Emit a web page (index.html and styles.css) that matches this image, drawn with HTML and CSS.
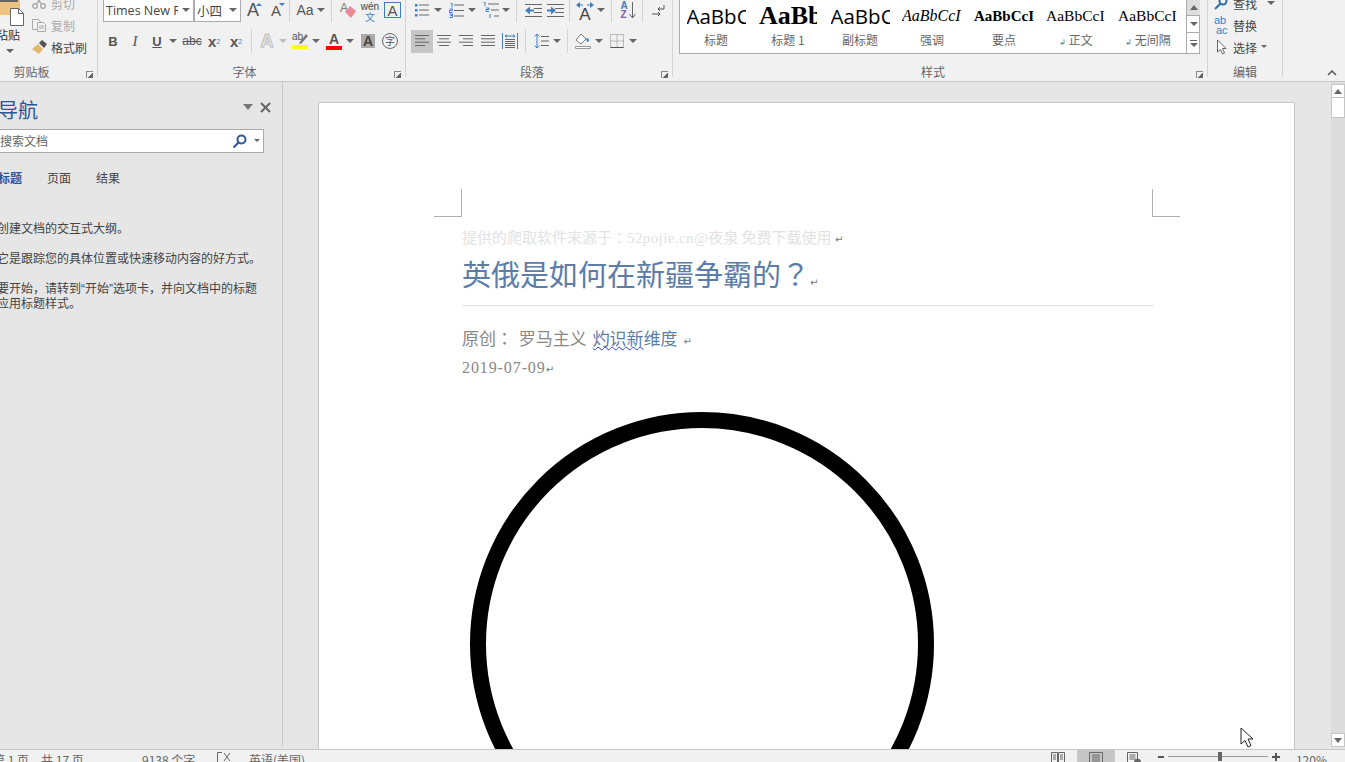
FILE: index.html
```html
<!DOCTYPE html>
<html>
<head>
	<title>Word</title>
	<meta charset="utf-8">
	<link rel="stylesheet" href="styles.css">
</head>
<body>
<div class="app">
	<div class="ribbon">

		<!-- clipboard -->
		<section class="group group-clip">
			<div class="clip-body">
				<div class="paste">
					<svg class="paste-icon" width="26" height="26" viewBox="0 0 26 26"><path d="M0 0h20v15H0z" fill="#edc47f"/><path d="M0 0h18v2H0z" fill="#666"/><path d="M10.5 8.5h8l5 5v12h-13z" fill="#fff" stroke="#666"/><path d="M18.5 8.5v5h5" fill="none" stroke="#666"/></svg>
					<div class="paste-label">粘贴</div>
					<span class="caret paste-caret"></span>
				</div>
				<div class="stack">
					<div class="stack-row disabled">
						<svg width="14" height="14" viewBox="0 0 14 14" fill="none" stroke="#aaa" stroke-width="1.4"><circle cx="3" cy="10" r="2.3"/><circle cx="11" cy="10" r="2.3"/><path d="M4.5 8 10 1M9.5 8 4 1"/></svg>
						<span>剪切</span>
					</div>
					<div class="stack-row disabled">
						<svg width="14" height="14" viewBox="0 0 14 14" fill="#f1f1f1" stroke="#aaa"><path d="M.5 1.5h6l2 2v8h-8z"/><path d="M5.5 4.5h6l2 2v7h-8z"/><path d="M7 8h5M7 10h5" fill="none"/></svg>
						<span>复制</span>
					</div>
					<div class="stack-row">
						<svg width="16" height="14" viewBox="0 0 16 14"><path d="M0 9 6 4l5 5-4 5z" fill="#e5b76c"/><path d="M7 3l3-3 5 4-3 4z" fill="#555"/></svg>
						<span>格式刷</span>
					</div>
				</div>
			</div>
			<div class="group-label">剪贴板</div>
			<i class="launcher"></i>
		</section>

		<!-- font -->
		<section class="group group-font">
			<div class="row row-top">
				<div class="combo combo-font ml1"><span class="combo-text">Times New Roman</span><span class="caret"></span></div>
				<div class="combo combo-size"><span class="combo-text">小四</span><span class="caret"></span></div>
				<div class="btn ml1 letter-lg">A<i class="tick tick-up"></i></div>
				<div class="btn ml1 letter-md">A<i class="tick tick-down"></i></div>
				<i class="sep ml2"></i>
				<div class="btn ml4 letter-aa">Aa</div><span class="caret"></span>
				<i class="sep ml5"></i>
				<div class="btn ml5">
					<svg width="18" height="18" viewBox="0 0 18 18"><text x="1" y="11" font-size="12" font-family="Liberation Sans" fill="#777">A</text><path d="M6 11l5-6 6 5-5 7z" fill="#e98a96"/></svg>
				</div>
				<div class="btn wen"><span class="wen-top">wén</span><span class="wen-bot">文</span></div>
				<div class="btn boxed-a">A</div>
			</div>
			<div class="row">
				<div class="btn fmt-b">B</div>
				<div class="btn fmt-i">I</div>
				<div class="btn fmt-u">U</div><span class="caret"></span>
				<div class="btn ml3 fmt-abc">abc</div>
				<div class="btn fmt-x">x<sub>2</sub></div>
				<div class="btn fmt-x">x<sup>2</sup></div>
				<i class="sep ml4"></i>
				<div class="btn ml4 effect-a">A</div><span class="caret caret-light"></span>
				<div class="btn ml1">
					<svg width="18" height="20" viewBox="0 0 18 20"><text x="1" y="9" font-size="10" font-family="Liberation Sans" fill="#555">ab</text><path d="M8 12l7-9 2 2-7 8z" fill="#777"/><path d="M1 14h16v4H1z" fill="#ffff00"/></svg>
				</div>
				<span class="caret"></span>
				<div class="btn ml2 color-a">A<i class="color-bar"></i></div><span class="caret"></span>
				<div class="btn ml2"><span class="shade-a">A</span></div>
				<div class="btn"><span class="circle-char">字</span></div>
			</div>
			<div class="group-label">字体</div>
			<i class="launcher"></i>
		</section>

		<!-- paragraph -->
		<section class="group group-para">
			<div class="row row-top">
				<div class="btn ml1"><svg width="14" height="14" viewBox="0 0 14 14"><path d="M4 2h10M4 7h10M4 12h10" stroke="#666"/><path d="M0 1h2.500v2.500H0zM0 6h2.500v2.500H0zM0 11h2.500v2.500H0z" fill="#3f7fbf"/></svg></div><span class="caret"></span>
				<div class="btn ml2"><svg width="15" height="15" viewBox="0 0 15 15"><path d="M5 2h10M5 7.500h10M5 13h10" stroke="#666"/><path d="M1 0h2v4.500M.500 6h3v1.500h-3v2h3M.500 11h3v1.500h-2 2v2h-3" fill="none" stroke="#3f7fbf"/></svg></div><span class="caret"></span>
				<div class="btn ml2"><svg width="17" height="17" viewBox="0 0 17 17"><path d="M6 2h11M9 8h8M12 14h5" stroke="#666"/><path d="M1 0h2v4M4 6h3v1.500h-3v2h3M8 12v4" fill="none" stroke="#3f7fbf"/></svg></div><span class="caret"></span>
				<i class="sep ml5"></i>
				<div class="btn ml5"><svg width="17" height="13" viewBox="0 0 17 13"><path d="M0 .500h17M9 4.500h8M9 8.500h8M0 12.500h17" stroke="#666"/><path d="M0 6.500 5 2.500v8zM5 5.500h4v2H5z" fill="#3f7fbf"/></svg></div>
				<div class="btn"><svg width="17" height="13" viewBox="0 0 17 13"><path d="M0 .500h17M8 4.500h9M8 8.500h9M0 12.500h17" stroke="#666"/><path d="M9 6.500 4 2.500v8zM0 5.500h4v2H0z" fill="#3f7fbf"/></svg></div>
				<i class="sep ml3"></i>
				<div class="btn ml4 cn-layout"><svg width="18" height="7" viewBox="0 0 18 7"><path d="M4 0 0 3l4 3zM14 0l4 3-4 3zM4 2.500h3v1H4zM11 2.500h3v1h-3z" fill="#3f7fbf"/></svg><span>A</span></div><span class="caret"></span>
				<i class="sep ml5"></i>
				<div class="btn ml5 sort-btn"><span class="sort-letters"><b class="sort-a">A</b><b class="sort-z">Z</b></span><svg width="7" height="17" viewBox="0 0 7 17"><path d="M3.500 0v16M.500 12l3 4 3-4" fill="none" stroke="#666"/></svg></div>
				<i class="sep ml3"></i>
				<div class="btn ml4"><svg width="13" height="13" viewBox="0 0 13 13" fill="none" stroke="#555"><path d="M12 1v4H6M8 3 6 5l2 2M0 10h8M6 8l2 2-2 2"/></svg></div>
			</div>
			<div class="row">
				<div class="btn ml1 btn-on"><svg width="14" height="12" viewBox="0 0 14 12" stroke="#666"><path d="M0 .500h14M0 3.800h10M0 7.200h14M0 10.500h10"/></svg></div>
				<div class="btn"><svg width="14" height="12" viewBox="0 0 14 12" stroke="#666"><path d="M0 .500h14M2 3.800h10M0 7.200h14M2 10.500h10"/></svg></div>
				<div class="btn"><svg width="14" height="12" viewBox="0 0 14 12" stroke="#666"><path d="M0 .500h14M4 3.800h10M0 7.200h14M4 10.500h10"/></svg></div>
				<div class="btn"><svg width="14" height="12" viewBox="0 0 14 12" stroke="#666"><path d="M0 .500h14M0 3.800h14M0 7.200h14M0 10.500h14"/></svg></div>
				<div class="btn"><svg width="16" height="16" viewBox="0 0 16 16" fill="none"><path d="M.500 0v16M15.500 0v16M3 3h10M5 1.500 3 3l2 1.500M11 1.500 13 3l-2 1.500" stroke="#3f7fbf"/><path d="M3 6.500h10M3 8.500h10M3 10.500h10M3 12.500h10M3 14.500h10" stroke="#666"/></svg></div>
				<i class="sep ml4"></i>
				<div class="btn ml4"><svg width="15" height="16" viewBox="0 0 15 16" fill="none"><path d="M3 1v14M.500 3.500 3 1l2.500 2.500M.500 12.500 3 15l2.500-2.500" stroke="#3f7fbf"/><path d="M7 3.500h8M7 8h8M7 12.500h8" stroke="#666"/></svg></div><span class="caret"></span>
				<i class="sep ml5"></i>
				<div class="btn ml4"><svg width="16" height="16" viewBox="0 0 16 16"><path d="M6 1 1 7l5 4 5-5z" fill="#fff" stroke="#777"/><path d="M11 5c2 0 3 1 3 3l-2 1z" fill="#3f7fbf"/><path d="M.500 13.500h15v2H.500z" fill="#fff" stroke="#999"/></svg></div><span class="caret"></span>
				<div class="btn ml2"><svg width="14" height="14" viewBox="0 0 14 14" fill="none" stroke="#888" stroke-dasharray="1 1"><path d="M.500.500h13v13H.500zM7 .500v13M.500 7h13"/><path d="M.500 13.500h13" stroke="#555" stroke-dasharray="none"/></svg></div><span class="caret"></span>
			</div>
			<div class="group-label">段落</div>
			<i class="launcher"></i>
		</section>

		<!-- styles -->
		<section class="group group-styles">
			<div class="gallery">
				<div class="gallery-item"><div class="preview pv-sans">AaBbC</div><div class="pv-label">标题</div></div>
				<div class="gallery-item"><div class="preview pv-h1">AaBb</div><div class="pv-label">标题 1</div></div>
				<div class="gallery-item"><div class="preview pv-sans">AaBbC</div><div class="pv-label">副标题</div></div>
				<div class="gallery-item"><div class="preview pv-em">AaBbCcI</div><div class="pv-label">强调</div></div>
				<div class="gallery-item"><div class="preview pv-strong">AaBbCcI</div><div class="pv-label">要点</div></div>
				<div class="gallery-item"><div class="preview pv-serif">AaBbCcI</div><div class="pv-label"><small>↲</small> 正文</div></div>
				<div class="gallery-item"><div class="preview pv-serif">AaBbCcI</div><div class="pv-label"><small>↲</small> 无间隔</div></div>
				<div class="gallery-scroll">
					<div class="gs-btn gs-up"><i class="tri-up"></i></div>
					<div class="gs-btn gs-down"><span class="caret"></span></div>
					<div class="gs-btn gs-more"><span class="more-bar"></span><span class="caret"></span></div>
				</div>
			</div>
			<div class="group-label">样式</div>
			<i class="launcher"></i>
		</section>

		<!-- editing -->
		<section class="group group-edit">
			<div class="stack">
				<div class="stack-row">
					<svg width="14" height="14" viewBox="0 0 14 14" fill="none" stroke="#2b6cb0" stroke-width="2"><circle cx="9" cy="5" r="3.500"/><path d="M6 8 1 13"/></svg>
					<span>查找</span><span class="caret edit-caret"></span>
				</div>
				<div class="stack-row">
					<span class="abac"><em>ab</em><em>ac</em></span>
					<span>替换</span>
				</div>
				<div class="stack-row">
					<svg width="14" height="16" viewBox="0 0 14 16" fill="#fff" stroke="#666"><path d="M3.500 1v12l3-2.500 2 4.500 2-1-2-4.500h3.500z"/></svg>
					<span>选择</span><span class="caret caret-sm"></span>
				</div>
			</div>
			<div class="group-label">编辑</div>
		</section>

		<svg class="collapse" width="10" height="6" viewBox="0 0 10 6" fill="none" stroke="#555" stroke-width="1.500"><path d="M1 5l4-4 4 4"/></svg>
	</div>

	<div class="workspace">
		<aside class="nav">
			<div class="nav-head">
				<h2 class="nav-title">导航</h2>
				<i class="tri-down"></i>
				<svg class="nav-close" width="11" height="11" viewBox="0 0 11 11" stroke="#666" stroke-width="2"><path d="M1 1l9 9M10 1l-9 9"/></svg>
			</div>
			<div class="nav-search">
				<span class="nav-search-text">搜索文档</span>
				<svg width="15" height="15" viewBox="0 0 15 15" fill="none" stroke="#2b579a" stroke-width="2"><circle cx="9.500" cy="5.500" r="4"/><path d="M6.500 8.500 1.500 13.500"/></svg>
				<span class="caret caret-sm"></span>
			</div>
			<div class="nav-tabs">
				<span class="nav-tab nav-tab-on">标题</span>
				<span class="nav-tab">页面</span>
				<span class="nav-tab">结果</span>
			</div>
			<div class="nav-help">
				<p>创建文档的交互式大纲。</p>
				<p>它是跟踪您的具体位置或快速移动内容的好方式。</p>
				<p>要开始，请转到<span class="quote">“</span>开始<span class="quote">”</span>选项卡，并向文档中的标题<br>应用标题样式。</p>
			</div>
		</aside>

		<main class="doc-area">
			<div class="page">
				<div class="crop-row"><i class="crop crop-l"></i><i class="crop crop-r"></i></div>
				<div class="page-text">
					<div class="doc-head">提供的爬取软件来源于：<span class="latin">52pojie.cn@</span>夜泉 免费下载使用 <span class="mark">↵</span></div>
					<h1 class="doc-title">英俄是如何在新疆争霸的？<span class="mark">↵</span></h1>
					<div class="doc-by">原创： 罗马主义 <span class="doc-link"><span class="wavy">灼识新</span>维度</span> <span class="mark">↵</span></div>
					<div class="doc-date">2019-07-09<span class="mark">↵</span></div>
					<div class="ring"></div>
				</div>
			</div>
		</main>

		<div class="scrollbar">
			<div class="sb-btn"><i class="tri-up"></i></div>
			<div class="sb-thumb"></div>
			<div class="sb-btn sb-last"><i class="tri-down"></i></div>
		</div>
	</div>

	<footer class="status">
		<span class="st-page">第 1 页，共 17 页</span>
		<span class="st-words">9138 个字</span>
		<svg class="st-proof" width="14" height="14" viewBox="0 0 14 14" fill="none" stroke="#666"><path d="M5 .500H.500v13H5M7 1l6 8M13 1 7 9"/></svg>
		<span class="st-lang">英语(美国)</span>
		<div class="st-right">
			<svg width="14" height="13" viewBox="0 0 14 13" fill="none" stroke="#666"><path d="M.500.500h6v12h-6zM7.500.500h6v12h-6zM2 3h3M2 5h3M2 7h3M9 3h3M9 5h3M9 7h3"/></svg>
			<div class="st-view-on"><svg width="14" height="13" viewBox="0 0 14 13" fill="none" stroke="#666"><path d="M.500.500h13v12H.500zM3 3h8M3 5h8M3 7h8M3 9h8"/></svg></div>
			<svg width="14" height="13" viewBox="0 0 14 13" fill="none" stroke="#666"><path d="M.500.500h10v12H.500zM2.500 3h6M2.500 5h6M2.500 7h6"/><circle cx="10.500" cy="10" r="3" fill="#666"/></svg>
			<span class="zoom-minus"></span>
			<div class="zoom-track"><i class="zoom-thumb"></i></div>
			<span class="zoom-plus"></span>
			<span class="st-zoom">120%</span>
		</div>
	</footer>

	<svg class="cursor" width="14" height="21" viewBox="0 0 14 21"><path d="M1 1v16l4-3.500 3 6.500 3-1.500-3-6.500h5z" fill="#fff" stroke="#222"/></svg>
</div>
</body>
</html>
```

FILE: styles.css
```css
* {
	box-sizing: border-box;
}
body {
	margin: 0;
	font-family: "Noto Sans CJK SC", sans-serif;
	font-size: 12px;
	color: #555;
	background-color: #e6e6e6;
}
i {
	display: block;
}
.app {
	position: relative;
	display: flex;
	flex-direction: column;
	width: 1345px;
	height: 762px;
	overflow: hidden;
}

/* ribbon */
.ribbon {
	display: flex;
	height: 82px;
	background-color: #f1f1f1;
	border-bottom: 1px solid #c6c6c6;
	flex-shrink: 0;
}
.group {
	position: relative;
	height: 77px;
	border-right: 1px solid #d4d4d4;
	padding-left: 4px;
	flex-shrink: 0;
}
.group-clip { width: 98px; padding-left: 0; }
.group-font { width: 308px; }
.group-para { width: 267px; }
.group-styles { width: 535px; padding-left: 6px; }
.group-edit { width: 75px; padding-left: 6px; }
.group-label {
	position: absolute;
	left: 0;
	right: 14px;
	top: 64px;
	line-height: 15px;
	text-align: center;
	color: #666;
}
.group-clip .group-label { left: -20px; }
.group-edit .group-label { right: 0; }
.launcher {
	position: absolute;
	right: 4px;
	top: 71px;
	width: 7px;
	height: 7px;
	border-left: 1px solid #888;
	border-top: 1px solid #888;
	background: linear-gradient(135deg, transparent 55%, #666 55%);
}
.row {
	display: flex;
	align-items: center;
	height: 24px;
	margin-top: 7px;
}
.row-top {
	margin-top: -2px;
}
.btn {
	position: relative;
	display: flex;
	align-items: center;
	justify-content: center;
	width: 22px;
	height: 23px;
	flex-shrink: 0;
	font-family: "Liberation Sans", sans-serif;
}
.btn-on {
	background-color: #c6c6c6;
}
.sep {
	width: 1px;
	height: 24px;
	background-color: #d4d4d4;
	flex-shrink: 0;
}
.caret {
	display: inline-block;
	position: relative;
	width: 10px;
	height: 4px;
	flex-shrink: 0;
}
.caret::after {
	content: "";
	position: absolute;
	left: 1px;
	top: 0;
	border-top: 4px solid #666;
	border-left: 4px solid transparent;
	border-right: 4px solid transparent;
}
.caret-light::after { border-top-color: #bbb; }
.caret-sm { width: 7px; }
.caret-sm::after {
	border-top-width: 3px;
	border-left-width: 3px;
	border-right-width: 3px;
}
.ml1 { margin-left: 1px; }
.ml2 { margin-left: 2px; }
.ml3 { margin-left: 3px; }
.ml4 { margin-left: 4px; }
.ml5 { margin-left: 5px; }

/* clipboard */
.clip-body {
	display: flex;
}
.paste {
	width: 32px;
}
.paste-icon {
	display: block;
}
.paste-label {
	margin: 1px 0 0 -4px;
	line-height: 16px;
	font-size: 12px;
	color: #333;
	white-space: nowrap;
}
.paste-caret {
	display: block;
	margin: 6px 0 0 5px;
}
.stack {
	margin-top: -8px;
}
.stack-row {
	display: grid;
	grid-template-columns: 19px auto auto;
	justify-content: start;
	align-items: center;
	height: 22px;
	color: #444;
	white-space: nowrap;
}
.disabled {
	color: #aaa;
}

/* font */
.combo {
	display: flex;
	align-items: center;
	height: 24px;
	background-color: #fff;
	border: 1px solid #ababab;
	flex-shrink: 0;
}
.combo .caret {
	margin-right: 2px;
}
.combo-font { width: 91px; }
.combo-size { width: 47px; margin-left: 0; }
.combo-text {
	flex: 1;
	overflow: hidden;
	white-space: nowrap;
	padding-left: 2px;
	font-family: "Open Sans", "Noto Sans CJK SC", sans-serif;
	font-size: 12.5px;
	color: #444;
	min-width: 0;
}
.combo-font .combo-text { margin-right: 3px; }
.letter-lg { font-size: 18px; color: #555; }
.letter-md { font-size: 15px; color: #555; }
.letter-aa { font-size: 14px; color: #555; }
.tick {
	position: absolute;
	right: 2px;
	top: 4px;
	border-left: 3px solid transparent;
	border-right: 3px solid transparent;
}
.tick-up { border-bottom: 3px solid #3f7fbf; }
.tick-down { border-top: 3px solid #3f7fbf; }
.wen {
	flex-direction: column;
	padding-top: 3px;
	line-height: 10px;
}
.wen-top { font-size: 10px; color: #444; line-height: 9px; }
.wen-bot { font-size: 10px; color: #3f7fbf; font-family: "Noto Sans CJK SC", sans-serif; line-height: 11px; }
.boxed-a {
	width: 17px;
	height: 16px;
	margin-left: 3px;
	border: 1px solid #3f7fbf;
	font-size: 15px;
	color: #555;
}
.fmt-b { font-weight: bold; font-size: 13px; }
.fmt-i { font-style: italic; font-family: "Liberation Serif", serif; font-size: 15px; }
.fmt-u { font-weight: bold; text-decoration: underline; font-size: 13px; }
.fmt-abc { font-size: 12px; text-decoration: line-through; }
.fmt-x { font-weight: bold; font-size: 15px; }
.fmt-x sub, .fmt-x sup {
	font-size: 7px;
	font-weight: normal;
	color: #3f7fbf;
}
.effect-a {
	font-size: 18px;
	font-weight: bold;
	color: #eee;
	-webkit-text-stroke: 1px #bbb;
}
.color-a {
	flex-direction: column;
	font-size: 14px;
	font-weight: bold;
	line-height: 14px;
}
.color-bar {
	width: 16px;
	height: 4px;
	background-color: #f00;
}
.shade-a {
	width: 14px;
	height: 14px;
	line-height: 14px;
	text-align: center;
	font-weight: bold;
	font-size: 14px;
	color: #444;
	background-color: #aaa;
}
.circle-char {
	width: 16px;
	height: 16px;
	border: 1px solid #666;
	border-radius: 50%;
	line-height: 14px;
	text-align: center;
	font-size: 10px;
	font-family: "Noto Sans CJK SC", sans-serif;
}

/* paragraph */
.cn-layout {
	flex-direction: column;
	padding-top: 2px;
	line-height: 12px;
	font-size: 17px;
	color: #444;
}
.sort-btn {
	gap: 1px;
}
.sort-letters {
	display: flex;
	flex-direction: column;
	line-height: 9px;
	font-size: 10px;
}
.sort-a { color: #3f7fbf; }
.sort-z { color: #8a5aa8; }

/* styles gallery */
.gallery {
	display: flex;
	width: 521px;
	height: 56px;
	margin-top: -2px;
	background-color: #fff;
	border: 1px solid #ababab;
}
.gallery-item {
	width: 72px;
	flex-shrink: 0;
	text-align: center;
}
.preview {
	width: 60px;
	height: 33px;
	margin: 0 auto;
	overflow: hidden;
	white-space: nowrap;
	color: #000;
	line-height: 34px;
	text-align: left;
}
.pv-sans { font-family: "Open Sans", sans-serif; font-size: 20.5px; width: 59px; }
.pv-h1 { font-family: "Liberation Serif", serif; font-size: 26px; font-weight: bold; width: 58px; margin-left: 7px; }
.pv-em { font-family: "Liberation Serif", serif; font-size: 16px; font-style: italic; }
.pv-strong { font-family: "Liberation Serif", serif; font-size: 15px; font-weight: bold; }
.pv-serif { font-family: "Liberation Serif", serif; font-size: 15.5px; }
.pv-label {
	line-height: 16px;
	color: #666;
}
.pv-label small {
	font-family: "DejaVu Sans", sans-serif;
	font-size: 8px;
}
.gallery-scroll {
	width: 14px;
	margin-left: 2px;
	flex-shrink: 0;
	border-left: 1px solid #ababab;
}
.gs-btn {
	display: flex;
	flex-direction: column;
	align-items: center;
	justify-content: center;
	gap: 2px;
	border-bottom: 1px solid #ababab;
}
.gs-btn .caret { width: 8px; left: -1px; }
.gs-up { height: 17px; background-color: #dedede; }
.gs-down { height: 17px; }
.gs-more { height: 20px; border-bottom: 0; }
.more-bar {
	width: 7px;
	height: 1px;
	background-color: #666;
}

/* editing */
.edit-caret { margin-left: 9px; }
.caret-sm { margin-left: 3px; }
.abac {
	display: flex;
	flex-direction: column;
	font-family: "Liberation Sans", sans-serif;
	font-size: 11px;
	line-height: 10px;
	color: #3f7fbf;
}
.abac em { font-style: normal; }
.abac em:last-child { padding-left: 2px; }
.collapse {
	margin: 70px 8px 0 auto;
}
.tri-up {
	border-bottom: 5px solid #666;
	border-left: 4px solid transparent;
	border-right: 4px solid transparent;
}
.tri-down {
	border-top: 5px solid #666;
	border-left: 4px solid transparent;
	border-right: 4px solid transparent;
}

/* workspace */
.workspace {
	flex: 1;
	display: flex;
	min-height: 0;
}
.nav {
	width: 283px;
	flex-shrink: 0;
	margin-bottom: 3px;
	border-right: 1px solid #c6c6c6;
}
.nav-head {
	display: flex;
	align-items: center;
	height: 47px;
	padding-top: 9px;
}
.nav-title {
	width: 243px;
	margin: 0 0 2px -2px;
	font-size: 20px;
	font-weight: normal;
	color: #2b579a;
}
.nav-head .tri-down {
	margin: 0 0 6px 2px;
	border-top-color: #777;
	border-top-width: 6px;
	border-left-width: 5px;
	border-right-width: 5px;
}
.nav-close {
	margin: 0 0 6px 7px;
}
.nav-search {
	display: flex;
	align-items: center;
	width: 264px;
	height: 24px;
	background-color: #fff;
	border: 1px solid #ababab;
	border-left: 0;
}
.nav-search-text {
	flex: 1;
	margin-bottom: 2px;
	color: #666;
}
.nav-search .caret {
	margin: 0 3px 0 6px;
}
.nav-tabs {
	display: flex;
	gap: 25px;
	margin: 16px 0 0 -2px;
	line-height: 18px;
	color: #444;
}
.nav-tab-on {
	font-weight: bold;
	color: #2b579a;
}
.nav-help {
	margin: 33px 0 0 -3px;
	color: #444;
	white-space: nowrap;
}
.nav-help p {
	margin: 0 0 15px;
	line-height: 15px;
}
.quote {
	font-family: "Liberation Sans", sans-serif;
	line-height: 0;
}

/* document */
.doc-area {
	flex: 1;
	display: flex;
	padding: 20px 36px 0 35px;
	min-width: 0;
}
.page {
	flex: 1;
	padding: 86px 114px 0 115px;
	overflow: hidden;
	background-color: #fff;
	border: 1px solid #c6c6c6;
	border-bottom: 0;
}
.crop-row {
	display: flex;
	justify-content: space-between;
}
.crop {
	width: 28px;
	height: 28px;
	border-bottom: 1px solid #b0b0b0;
}
.crop-l { border-right: 1px solid #b0b0b0; }
.crop-r { border-left: 1px solid #b0b0b0; }
.page-text {
	margin: 0 26px 0 28px;
}
.doc-head {
	margin-top: 10px;
	line-height: 20px;
	font-family: "Noto Sans CJK TC", sans-serif;
	font-size: 15px;
	color: #e2e2e2;
	white-space: nowrap;
}
.latin {
	font-family: "Liberation Serif", serif;
	letter-spacing: 0.4px;
}
.mark {
	font-family: "DejaVu Sans", sans-serif;
	font-size: 10px;
	line-height: 0;
	color: #777;
	font-weight: normal;
}
.doc-title {
	margin: 5px 0 0;
	padding-bottom: 12px;
	border-bottom: 1px solid #e0e0e0;
	line-height: 40px;
	font-family: "Noto Sans CJK TC", sans-serif;
	font-size: 29px;
	font-weight: normal;
	color: #5b7da8;
	white-space: nowrap;
}
.doc-by {
	margin-top: 20px;
	line-height: 24px;
	font-family: "Noto Sans CJK TC", sans-serif;
	font-size: 17px;
	word-spacing: 2px;
	color: #888;
}
.doc-link {
	color: #5b7da8;
}
.wavy {
	text-decoration: underline wavy #2a3fd0 1px;
}
.doc-date {
	margin-top: 8px;
	line-height: 20px;
	font-family: "Liberation Serif", serif;
	font-size: 16px;
	letter-spacing: 0.9px;
	color: #888;
}
.ring {
	width: 464px;
	height: 464px;
	margin: 34px 0 0 8px;
	border: 16px solid #000;
	border-radius: 50%;
}

/* scrollbar */
.scrollbar {
	display: flex;
	flex-direction: column;
	width: 14px;
	flex-shrink: 0;
	padding-top: 2px;
	margin-bottom: 2px;
	background-color: #dcdcdc;
}
.sb-btn {
	display: flex;
	align-items: center;
	justify-content: center;
	height: 14px;
	background-color: #fff;
	border: 1px solid #c6c6c6;
}
.sb-thumb {
	height: 20px;
	background-color: #fff;
	border: 1px solid #c6c6c6;
	border-top: 0;
}
.sb-last {
	margin-top: auto;
}

/* status bar */
.status {
	display: flex;
	align-items: flex-start;
	height: 13px;
	flex-shrink: 0;
	background-color: #f1f1f1;
	border-top: 1px solid #c6c6c6;
	color: #666;
	white-space: nowrap;
}
.status span {
	line-height: 20px;
}
.st-page {
	margin-left: -7px;
	width: 149px;
}
.st-words {
	width: 75px;
}
.st-proof {
	margin-top: 2px;
}
.st-lang {
	margin-left: 18px;
}
.st-right {
	display: flex;
	align-items: flex-start;
	margin-left: auto;
	padding: 2px 18px 0 0;
}
.st-right svg {
	flex-shrink: 0;
}
.st-view-on {
	display: flex;
	justify-content: center;
	width: 38px;
	height: 14px;
	margin: -2px 12px 0;
	padding-top: 2px;
	background-color: #c6c6c6;
}
.zoom-minus {
	width: 6px;
	height: 2px;
	margin: 4px 4px 0 17px;
	background-color: #555;
}
.zoom-track {
	position: relative;
	width: 100px;
	height: 1px;
	margin-top: 4px;
	background-color: #999;
}
.zoom-thumb {
	position: absolute;
	left: 50px;
	top: -4px;
	width: 4px;
	height: 9px;
	background-color: #666;
}
.zoom-plus {
	position: relative;
	width: 8px;
	height: 2px;
	margin: 4px 0 0 4px;
	background-color: #555;
}
.zoom-plus::after {
	content: "";
	position: absolute;
	left: 3px;
	top: -3px;
	width: 2px;
	height: 8px;
	background-color: #555;
}
.st-zoom {
	margin: -2px 0 0 16px;
}
.cursor {
	position: absolute;
	left: 1240px;
	top: 727px;
}
```
